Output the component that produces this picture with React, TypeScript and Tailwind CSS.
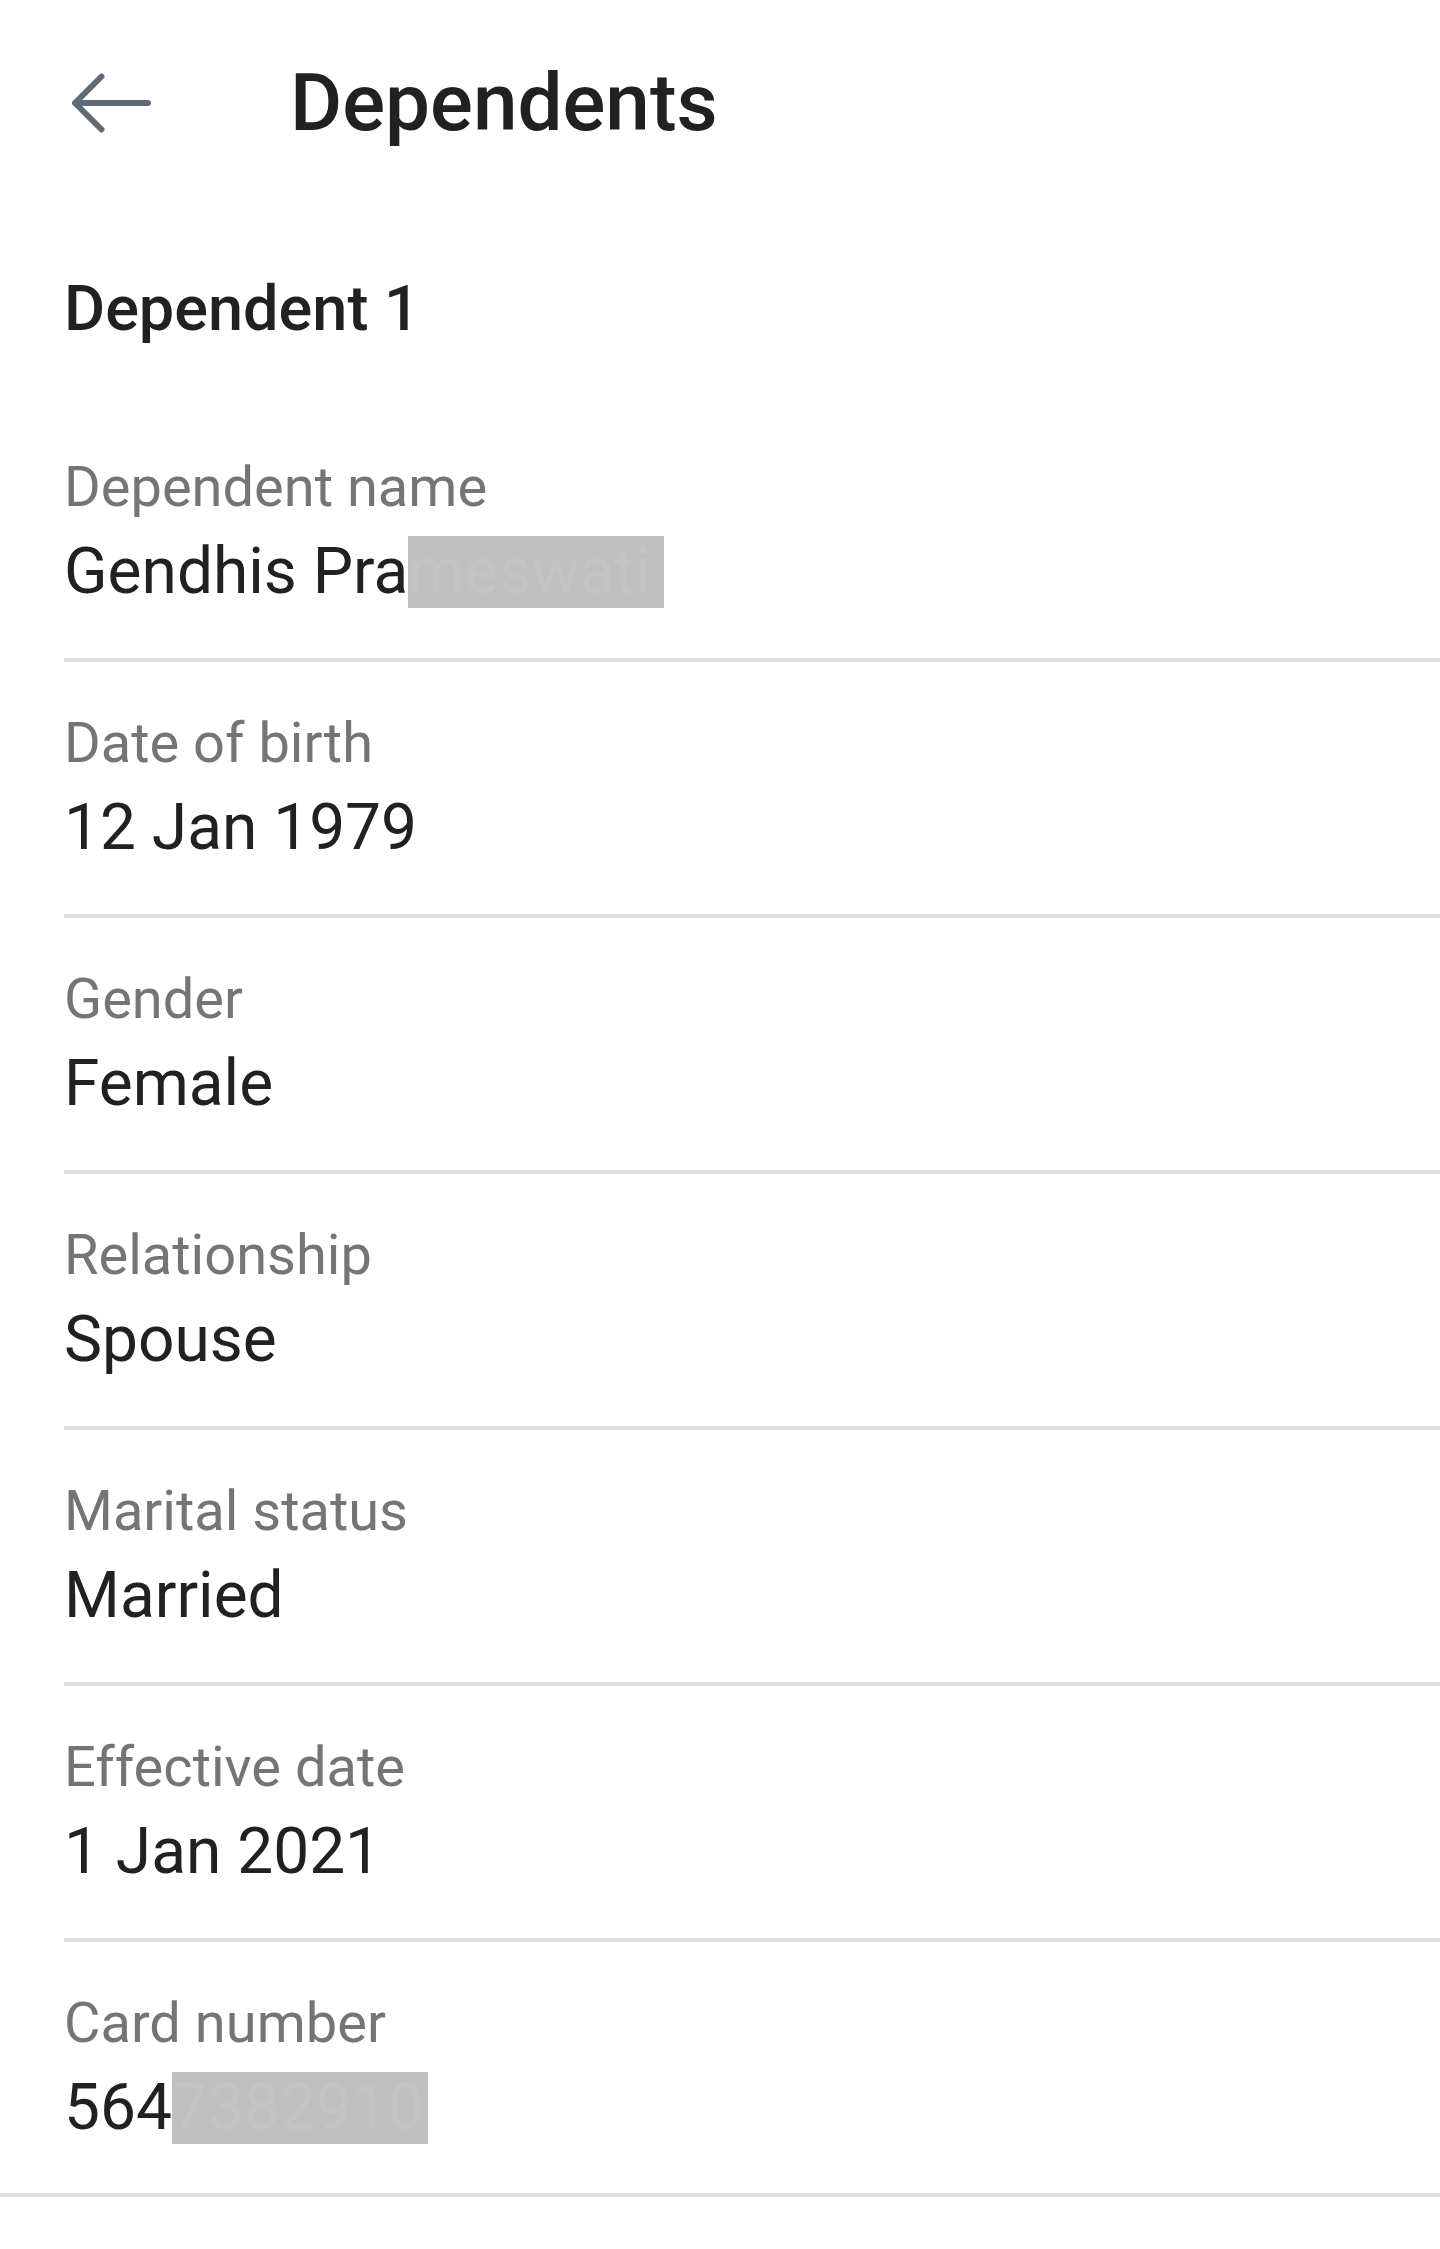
const rows = [
  { label: "Dependent name", value: "Gendhis Pra", hidden: "meswati" },
  { label: "Date of birth", value: "12 Jan 1979" },
  { label: "Gender", value: "Female" },
  { label: "Relationship", value: "Spouse" },
  { label: "Marital status", value: "Married" },
  { label: "Effective date", value: "1 Jan 2021" },
  { label: "Card number", value: "564", hidden: "7382910" },
];

function BackArrow() {
  return (
    <svg width="80" height="60" viewBox="0 0 80 60" fill="none">
      <path
        d="M3 30H76M3 30L29.5 3.5M3 30L29.5 56.5"
        stroke="#5f6a78"
        strokeWidth="6"
        strokeLinecap="round"
        strokeLinejoin="round"
      />
    </svg>
  );
}

export default function App() {
  return (
    <div className="min-h-[2249px] w-[1440px] bg-white font-['Roboto',sans-serif] text-[#212121]">
      <div className="flex h-[206px] items-center">
        <button className="ml-[72px]">
          <BackArrow />
        </button>
        <h1 className="ml-[138px] text-[80px] font-medium leading-[80px]">Dependents</h1>
      </div>

      <h2 className="ml-[64px] mt-[72px] text-[63px] font-medium leading-[62px]">Dependent 1</h2>

      <div className="mt-[66px] flex flex-col">
        {rows.map((row, i) => {
          const last = i === rows.length - 1;
          return (
            <div
              key={row.label}
              className={
                last
                  ? "border-b-4 border-[#e0e0e0] pb-[49px] pl-[64px] pt-[48px]"
                  : "ml-[64px] border-b-4 border-[#e0e0e0] pb-[50px] pt-[48px]"
              }
            >
              <p className="text-[56px] leading-[66px] text-[#757575]">{row.label}</p>
              <p className="mt-[16px] whitespace-nowrap text-[64px] leading-[72px]">
                {row.value}
                {row.hidden && (
                  <span className="inline-block w-[256px] bg-[#bfbfbf] align-top text-[#c3c3c3]">
                    {row.hidden}
                  </span>
                )}
              </p>
            </div>
          );
        })}
      </div>
    </div>
  );
}
